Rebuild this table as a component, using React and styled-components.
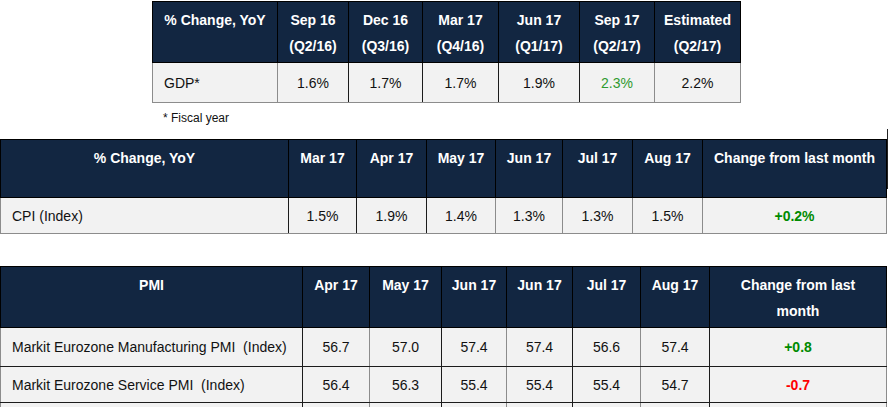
import React from "react";
import styled, { createGlobalStyle } from "styled-components";

const GlobalStyle = createGlobalStyle`
  body {
    margin: 0;
    background: #fff;
    font-family: "Liberation Sans", Arial, sans-serif;
  }
`;

const NAVY = "#122641";
const DARK = "#1c1c1c";
const GRAY = "#8c8c8c";

const Page = styled.div`
  position: relative;
  width: 888px;
  height: 407px;
  overflow: hidden;
  display: flex;
  flex-direction: column;

  /* scan artefact down the right margin */
  &::after {
    content: "";
    position: absolute;
    right: 0;
    top: 129px;
    width: 1px;
    height: 60px;
    background: #222;
  }
`;

const Section = styled.section`
  margin-top: ${(p) => p.$gap}px;
  padding-left: ${(p) => p.$indent || 0}px;
`;

const Table = styled.table`
  border-collapse: collapse;
  table-layout: fixed;
  width: ${(p) => p.$width}px;
  font-family: "Liberation Sans", Arial, sans-serif;
`;

const HeadRow = styled.tr`
  height: ${(p) => p.$h}px;
`;

const HeadCell = styled.th`
  background: ${NAVY};
  color: #fff;
  font-size: 14px;
  font-weight: bold;
  line-height: 26px;
  text-align: center;
  vertical-align: top;
  padding: 5px 2px 0;
  border: 1px solid #000;
  white-space: nowrap;
`;

const Row = styled.tr`
  height: ${(p) => p.$h}px;
`;

const Cell = styled.td`
  background: #f2f2f2;
  color: ${(p) =>
    p.$tone === "rise" ? "#008a00" : p.$tone === "fall" ? "#ff0000" : p.$tone === "soft" ? "#2f9a2f" : "#111"};
  font-size: 14px;
  font-weight: ${(p) => (p.$tone === "rise" || p.$tone === "fall" ? "bold" : "normal")};
  text-align: ${(p) => (p.$label ? "left" : "center")};
  vertical-align: middle;
  padding: 0 ${(p) => (p.$label ? "4px 0 11px" : "2px")};
  border: 1px solid ${GRAY};
  border-right-color: ${(p) => (p.$edge === "dark" ? DARK : GRAY)};
  border-bottom-color: ${(p) => (p.$under === "dark" ? DARK : GRAY)};
  white-space: nowrap;
`;

const Note = styled.p`
  margin: 7px 0 0 11px;
  font-size: 12px;
  line-height: 16px;
  color: #111;
`;

function DataTable({ widths, heads, headHeight, rows, edges, under }) {
  return (
    <Table $width={widths.reduce((a, b) => a + b, 0)}>
      <colgroup>
        {widths.map((w, i) => (
          <col key={i} style={{ width: w }} />
        ))}
      </colgroup>
      <thead>
        <HeadRow $h={headHeight}>
          {heads.map((h, i) => (
            <HeadCell key={i}>
              {h.split("\n").map((line, j) => (
                <React.Fragment key={j}>
                  {j > 0 && <br />}
                  {line}
                </React.Fragment>
              ))}
            </HeadCell>
          ))}
        </HeadRow>
      </thead>
      <tbody>
        {rows.map((r, ri) => (
          <Row key={ri} $h={r.h}>
            {r.cells.map((c, ci) => (
              <Cell
                key={ci}
                $label={ci === 0}
                $edge={edges[ci]}
                $under={under && under[ri]}
                $tone={r.tones && r.tones[ci]}
              >
                {c}
              </Cell>
            ))}
          </Row>
        ))}
      </tbody>
    </Table>
  );
}

const gdp = {
  widths: [125, 71, 74, 76, 81, 75, 86],
  heads: [
    "% Change, YoY",
    "Sep 16\n(Q2/16)",
    "Dec 16\n(Q3/16)",
    "Mar 17\n(Q4/16)",
    "Jun 17\n(Q1/17)",
    "Sep 17\n(Q2/17)",
    "Estimated\n(Q2/17)",
  ],
  rows: [
    {
      h: 40,
      cells: ["GDP*", "1.6%", "1.7%", "1.7%", "1.9%", "2.3%", "2.2%"],
      tones: [null, null, null, null, null, "soft", null],
    },
  ],
  edges: ["gray", "dark", "dark", "dark", "dark", "gray", "gray"],
};

const cpi = {
  widths: [288, 68, 70, 69, 67, 70, 70, 184],
  heads: ["% Change, YoY", "Mar 17", "Apr 17", "May 17", "Jun 17", "Jul 17", "Aug 17", "Change from last month"],
  rows: [
    {
      h: 36,
      cells: ["CPI (Index)", "1.5%", "1.9%", "1.4%", "1.3%", "1.3%", "1.5%", "+0.2%"],
      tones: [null, null, null, null, null, null, null, "rise"],
    },
  ],
  edges: ["dark", "dark", "dark", "gray", "gray", "gray", "gray", "gray"],
};

const pmi = {
  widths: [302, 67, 72, 65, 66, 68, 69, 177],
  heads: ["PMI", "Apr 17", "May 17", "Jun 17", "Jun 17", "Jul 17", "Aug 17", "Change from last\nmonth"],
  rows: [
    {
      h: 39,
      cells: ["Markit Eurozone Manufacturing PMI\u00a0 (Index)", "56.7", "57.0", "57.4", "57.4", "56.6", "57.4", "+0.8"],
      tones: [null, null, null, null, null, null, null, "rise"],
    },
    {
      h: 36,
      cells: ["Markit Eurozone Service PMI\u00a0 (Index)", "56.4", "56.3", "55.4", "55.4", "55.4", "54.7", "-0.7"],
      tones: [null, null, null, null, null, null, null, "fall"],
    },
    { h: 36, cells: ["", "", "", "", "", "", "", ""] },
  ],
  edges: ["dark", "gray", "dark", "gray", "dark", "gray", "dark", "gray"],
  under: ["dark", "dark", "gray"],
};

export default function App() {
  return (
    <Page>
      <GlobalStyle />
      <Section $gap={1} $indent={152}>
        <DataTable {...gdp} headHeight={61} />
        <Note>* Fiscal year</Note>
      </Section>
      <Section $gap={13}>
        <DataTable {...cpi} headHeight={58} />
      </Section>
      <Section $gap={32}>
        <DataTable {...pmi} headHeight={61} />
      </Section>
    </Page>
  );
}
